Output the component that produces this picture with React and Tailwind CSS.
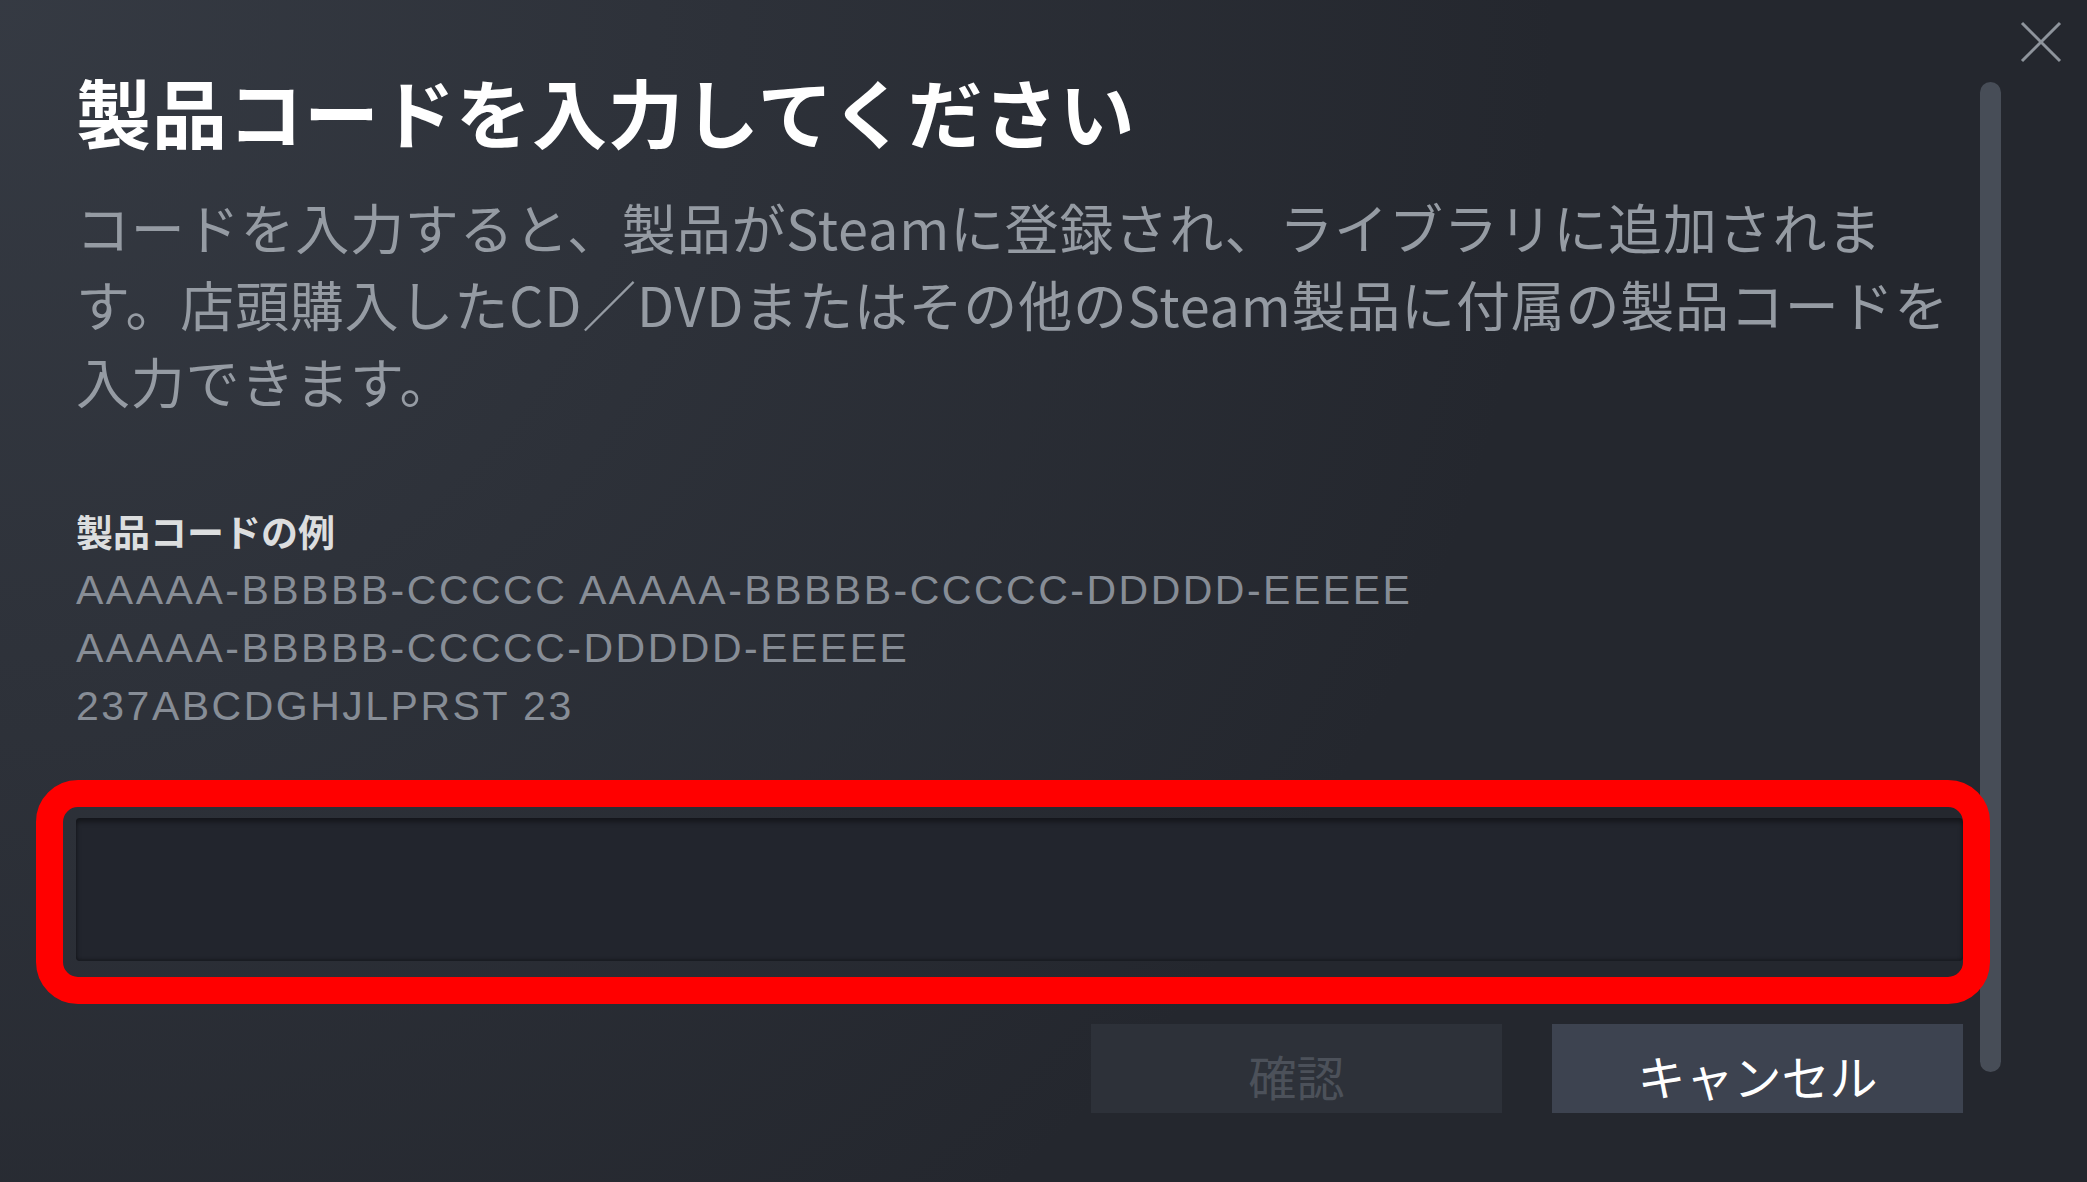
import React from 'react';

const jp = { fontFamily: '"Noto Sans CJK JP", "Noto Sans", sans-serif' };

const codeExamples = [
  'AAAAA-BBBBB-CCCCC AAAAA-BBBBB-CCCCC-DDDDD-EEEEE',
  'AAAAA-BBBBB-CCCCC-DDDDD-EEEEE',
  '237ABCDGHJLPRST 23',
];

export default function App() {
  return (
    <div
      className="relative flex w-[2087px] h-[1182px] overflow-hidden bg-[#24272e] bg-[radial-gradient(circle_at_top_left,rgba(74,81,92,0.45)_0%,rgba(75,81,92,0)_65%)] font-['Noto_Sans_CJK_JP',sans-serif]"
    >
      {/* content */}
      <div className="flex flex-col w-[1887px] ml-[76px] pt-[67px]">
        <h1 className="text-[75px] leading-[88px] tracking-[1px] font-bold text-white whitespace-nowrap">
          製品コードを入力してください
        </h1>

        <p className="mt-[33px] text-[54px] leading-[77px] tracking-[0.8px] text-[#959ba3] whitespace-nowrap">
          コードを入力すると、製品がSteamに登録され、ライブラリに追加されま
          <br />
          す。店頭購入したCD／DVDまたはその他のSteam製品に付属の製品コードを
          <br />
          入力できます。
        </p>

        <div className="mt-[88px] text-[37px] leading-[48px] font-bold text-[#dcdedf]">
          製品コードの例
        </div>
        <div className="mt-[6px] font-['Liberation_Sans',sans-serif] text-[41px] leading-[58px] tracking-[2.5px] text-[#878d96]">
          {codeExamples.map(c => (
            <div key={c}>{c}</div>
          ))}
        </div>

        {/* input with red highlight */}
        <div className="relative mt-[83px]">
          <input
            type="text"
            className="block w-full h-[143px] rounded-[4px] bg-[#22252d] shadow-[inset_0_4px_5px_rgba(0,0,0,0.4),inset_0_-2px_3px_rgba(0,0,0,0.25)] outline-none"
          />
          <div className="pointer-events-none absolute left-[-40px] top-[-38px] right-[-27px] bottom-[-43px] rounded-[42px] border-[27px] border-[#ff0000]" />
        </div>

        <div className="flex justify-end gap-[50px] mt-[63px]">
          <button className="w-[411px] h-[89px] pt-[12px] bg-[#2d3139] text-[48px] leading-[64px] text-[#4c515a]" style={jp}>
            確認
          </button>
          <button className="w-[411px] h-[89px] pt-[12px] bg-[#3d4350] text-[48px] leading-[64px] text-white" style={jp}>
            キャンセル
          </button>
        </div>
      </div>

      {/* scrollbar */}
      <div className="ml-[17px] mt-[82px] w-[21px] h-[990px] rounded-full bg-[#474d57]" />

      {/* close */}
      <button className="absolute right-[24px] top-[20px] w-[44px] h-[44px] text-[#8e949c]">
        <svg viewBox="0 0 44 44" className="w-full h-full" fill="none" stroke="currentColor" strokeWidth="3">
          <path d="M3 3L41 41M41 3L3 41" />
        </svg>
      </button>
    </div>
  );
}
